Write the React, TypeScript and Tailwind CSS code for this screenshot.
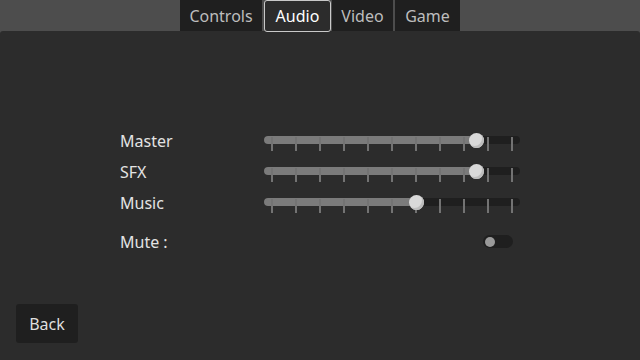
import { useState } from "react";

const tabs = [
	{ name: "Controls", w: "w-[82px]" },
	{ name: "Audio", w: "w-[67px] ml-[2px]" },
	{ name: "Video", w: "w-[61px] ml-[1px]" },
	{ name: "Game", w: "w-[65px] ml-[2px]" },
];

const sliders = [
	{ label: "Master", value: 0.85 },
	{ label: "SFX", value: 0.85 },
	{ label: "Music", value: 0.6 },
];

function Slider({ value }: { value: number }) {
	// grabber travels from 8px to 248px inside the 256px track
	const x = 8 + value * 240;
	return (
		<div className="relative h-[31px] w-[256px]">
			<div className="absolute top-[11px] left-0 h-[8px] w-full rounded-full bg-[#1f1f1f]" />
			<div
				className="absolute top-[11px] left-0 h-[8px] rounded-full bg-[#7b7b7b]"
				style={{ width: x }}
			/>
			{Array.from({ length: 11 }).map((_, i) => (
				<div
					key={i}
					className="absolute top-[12px] h-[14px] w-[2px] bg-[#737373]"
					style={{ left: 7 + i * 24 }}
				/>
			))}
			<div
				className="absolute top-[8px] h-[15px] w-[15px] rounded-full bg-[#d9d9d9] shadow-[inset_-2px_-2px_0_#bdbdbd]"
				style={{ left: x - 7 }}
			/>
		</div>
	);
}

export default function App() {
	const [active, setActive] = useState("Audio");
	const [mute, setMute] = useState(false);

	return (
		<div className="flex h-[360px] w-[640px] flex-col bg-[#4d4d4d] font-['Noto_Sans',sans-serif] text-[16px]">
			{/* Tabs */}
			<div className="flex h-[31px] justify-center">
				{tabs.map((t) =>
					t.name === active ? (
						<button
							type="button"
							key={t.name}
							className={`${t.w} z-10 h-[32px] rounded-[3px] border border-[#c9c9c9] bg-[#2c2c2c] text-white`}
						>
							{t.name}
						</button>
					) : (
						<button
							type="button"
							key={t.name}
							onClick={() => setActive(t.name)}
							className={`${t.w} h-[31px] bg-[#1f1f1f] text-[#bdbdbd]`}
						>
							{t.name}
						</button>
					),
				)}
			</div>

			{/* Panel */}
			<div className="flex flex-1 flex-col rounded-t-[3px] bg-[#2c2c2c] text-[#e3e3e3]">
				<div className="flex flex-col pt-[94px] pl-[120px]">
					{sliders.map((s) => (
						<div key={s.label} className="flex h-[31px] items-center">
							<div className="w-[144px]">{s.label}</div>
							<Slider value={s.value} />
						</div>
					))}
					<div className="mt-[8px] flex h-[31px] items-center">
						<div className="w-[144px]">Mute :</div>
						<div className="flex w-[256px] justify-end pr-[7px]">
							<button
								type="button"
								onClick={() => setMute(!mute)}
								className="flex h-[13px] w-[30px] items-center rounded-full bg-[#1f1f1f] px-[2px]"
							>
								<div className="h-[10px] w-[10px] rounded-full bg-[#9a9a9a]" />
							</button>
						</div>
					</div>
				</div>

				<div className="mt-auto mb-[17px] ml-[16px]">
					<button
						type="button"
						className="h-[39px] w-[62px] rounded-[3px] bg-[#1f1f1f] text-[#dedede]"
					>
						Back
					</button>
				</div>
			</div>
		</div>
	);
}
